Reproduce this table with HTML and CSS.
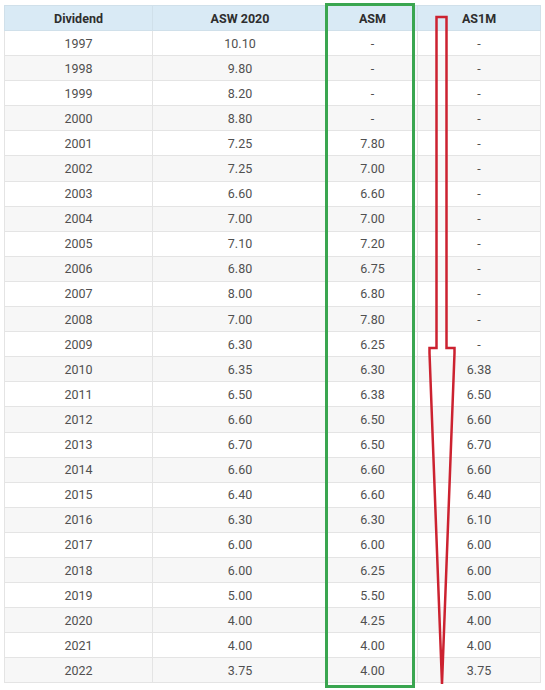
FILE: index.html
```html
<!DOCTYPE html>
<html lang="en">
<head>
    <meta charset="UTF-8">
    <title>Dividend history</title>
    <link rel="stylesheet" href="styles.css">
</head>
<body>
    <div class="page">
        <!-- Dividend table -->
        <table class="dividend-table">
            <colgroup>
                <col class="col-year">
                <col class="col-asw">
                <col class="col-asm">
                <col class="col-as1m">
            </colgroup>
            <thead>
                <tr><th>Dividend</th><th>ASW 2020</th><th>ASM</th><th>AS1M</th></tr>
            </thead>
            <tbody>
                <tr><td>1997</td><td>10.10</td><td>-</td><td>-</td></tr>
                <tr><td>1998</td><td>9.80</td><td>-</td><td>-</td></tr>
                <tr><td>1999</td><td>8.20</td><td>-</td><td>-</td></tr>
                <tr><td>2000</td><td>8.80</td><td>-</td><td>-</td></tr>
                <tr><td>2001</td><td>7.25</td><td>7.80</td><td>-</td></tr>
                <tr><td>2002</td><td>7.25</td><td>7.00</td><td>-</td></tr>
                <tr><td>2003</td><td>6.60</td><td>6.60</td><td>-</td></tr>
                <tr><td>2004</td><td>7.00</td><td>7.00</td><td>-</td></tr>
                <tr><td>2005</td><td>7.10</td><td>7.20</td><td>-</td></tr>
                <tr><td>2006</td><td>6.80</td><td>6.75</td><td>-</td></tr>
                <tr><td>2007</td><td>8.00</td><td>6.80</td><td>-</td></tr>
                <tr><td>2008</td><td>7.00</td><td>7.80</td><td>-</td></tr>
                <tr><td>2009</td><td>6.30</td><td>6.25</td><td>-</td></tr>
                <tr><td>2010</td><td>6.35</td><td>6.30</td><td>6.38</td></tr>
                <tr><td>2011</td><td>6.50</td><td>6.38</td><td>6.50</td></tr>
                <tr><td>2012</td><td>6.60</td><td>6.50</td><td>6.60</td></tr>
                <tr><td>2013</td><td>6.70</td><td>6.50</td><td>6.70</td></tr>
                <tr><td>2014</td><td>6.60</td><td>6.60</td><td>6.60</td></tr>
                <tr><td>2015</td><td>6.40</td><td>6.60</td><td>6.40</td></tr>
                <tr><td>2016</td><td>6.30</td><td>6.30</td><td>6.10</td></tr>
                <tr><td>2017</td><td>6.00</td><td>6.00</td><td>6.00</td></tr>
                <tr><td>2018</td><td>6.00</td><td>6.25</td><td>6.00</td></tr>
                <tr><td>2019</td><td>5.00</td><td>5.50</td><td>5.00</td></tr>
                <tr><td>2020</td><td>4.00</td><td>4.25</td><td>4.00</td></tr>
                <tr><td>2021</td><td>4.00</td><td>4.00</td><td>4.00</td></tr>
                <tr><td>2022</td><td>3.75</td><td>4.00</td><td>3.75</td></tr>
            </tbody>
        </table>

        <!-- Hand-drawn markup over the table -->
        <svg class="markup" width="545" height="690" viewBox="0 0 545 690">
            <rect x="326.5" y="4.5" width="87" height="682" fill="none" stroke="#3aa650" stroke-width="3"/>
            <path d="M436.5 17 H446.5 V348 H454.5 V353 L442 684 L429.5 353 V348 H436.5 Z"
                  fill="none" stroke="#cc2230" stroke-width="2.5" stroke-linejoin="miter"/>
        </svg>
    </div>
</body>
</html>
```

FILE: styles.css
```css
/* Page basics */
body {
    margin: 0;
    background-color: #ffffff;
    font-family: Roboto, "Liberation Sans", sans-serif;
}

.page {
    position: relative;
    width: 545px;
    height: 690px;
    overflow: hidden;
}

/* Table layout */
.dividend-table {
    margin: 5px 0 0 4px;
    width: 536px;
    table-layout: fixed;
    border-collapse: collapse;
    font-size: 12.5px;
    color: #505050;
}

.col-year { width: 148px; }
.col-asw { width: 175px; }
.col-asm { width: 90px; }
.col-as1m { width: 123px; }

.dividend-table th,
.dividend-table td {
    height: 24.1px;
    padding: 0;
    text-align: center;
    border: 1px solid #e4e4e4;
}

/* Header row */
.dividend-table th {
    height: 24px;
    background-color: #d9eaf5;
    color: #2e2e2e;
    font-weight: 700;
    border-color: #d0e0ea;
}

/* Zebra rows */
.dividend-table tbody tr:nth-child(even) td {
    background-color: #f7f7f7;
}

/* Overlay drawing */
.markup {
    position: absolute;
    left: 0;
    top: 0;
}
```
